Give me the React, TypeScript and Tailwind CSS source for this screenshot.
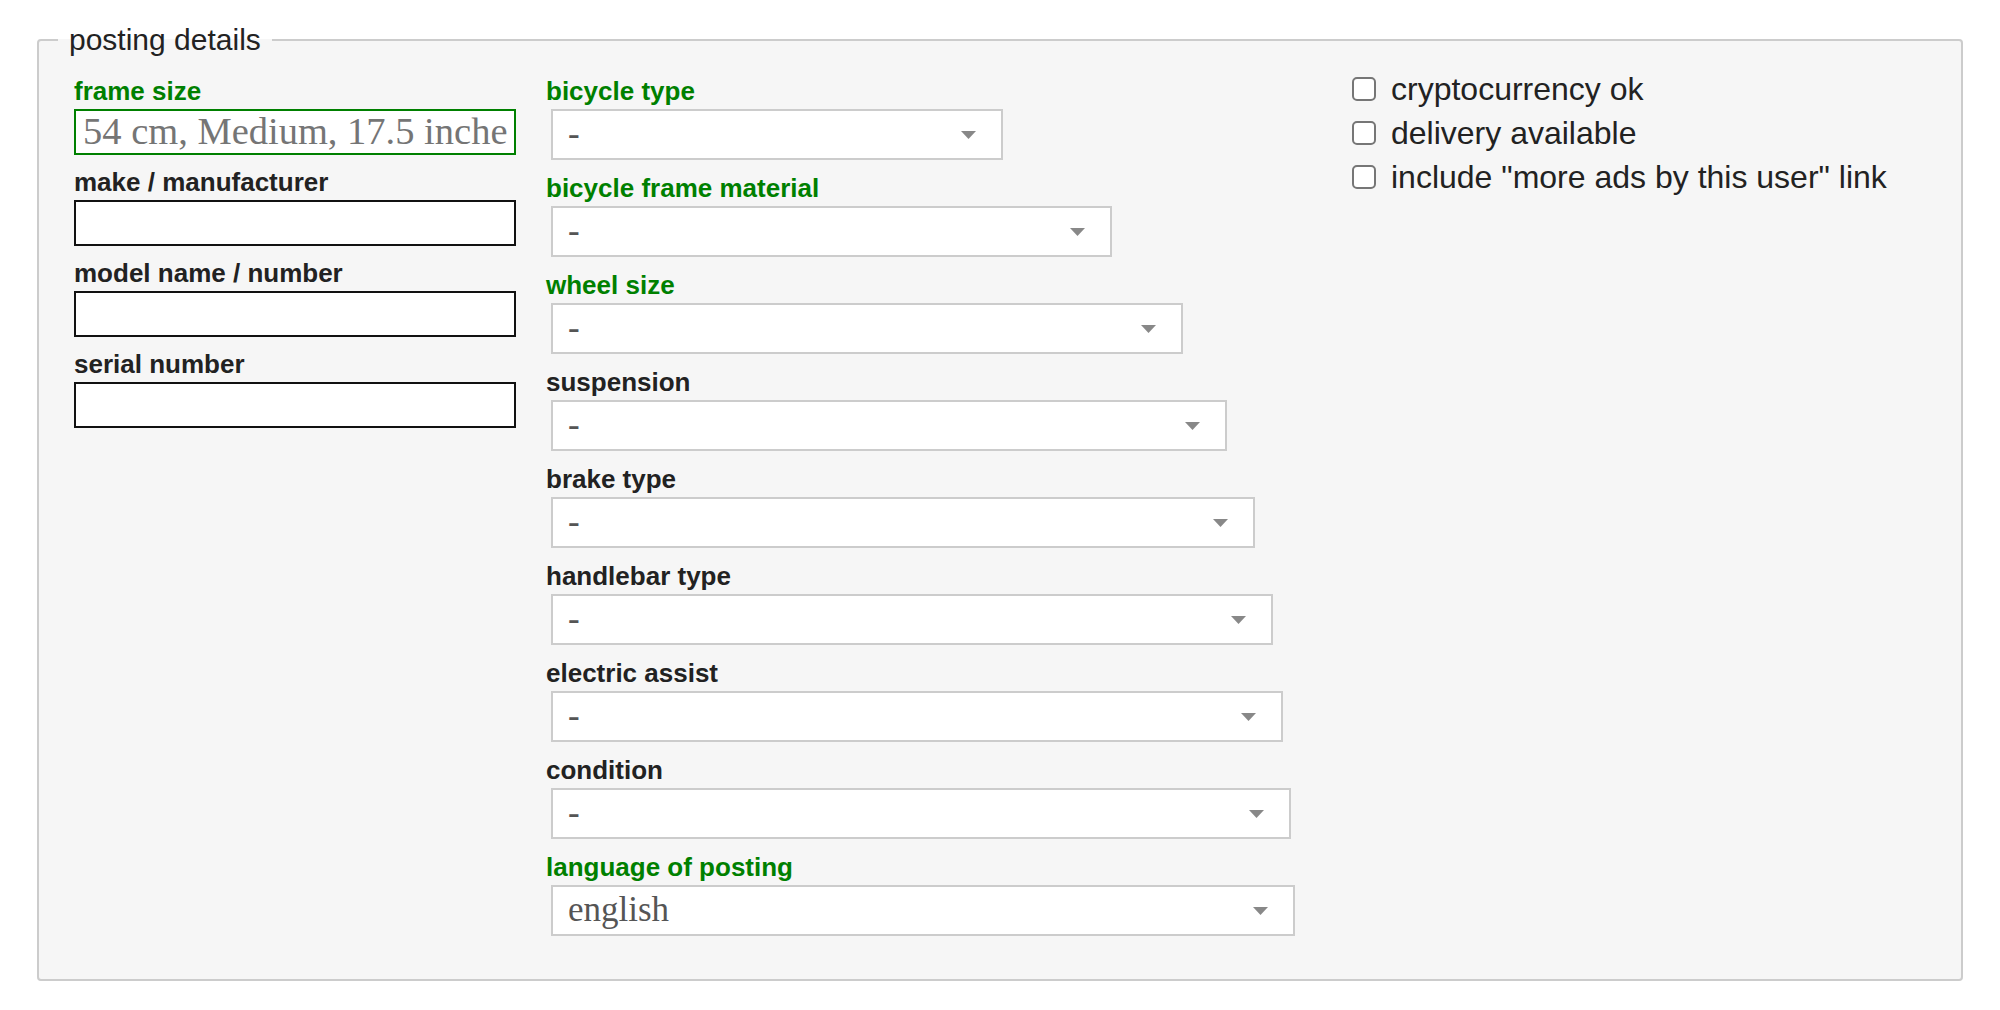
import React from "react";

const sans = "font-['Liberation_Sans',Arial,sans-serif]";
const serif = "font-['Liberation_Serif','Times_New_Roman',serif]";

const textFields = [
  { label: "frame size", green: true, placeholder: "54 cm, Medium, 17.5 inches" },
  { label: "make / manufacturer", green: false, placeholder: "" },
  { label: "model name / number", green: false, placeholder: "" },
  { label: "serial number", green: false, placeholder: "" },
];

const selects = [
  { label: "bicycle type", green: true, width: "w-[452px]", value: "-" },
  { label: "bicycle frame material", green: true, width: "w-[561px]", value: "-" },
  { label: "wheel size", green: true, width: "w-[632px]", value: "-" },
  { label: "suspension", green: false, width: "w-[676px]", value: "-" },
  { label: "brake type", green: false, width: "w-[704px]", value: "-" },
  { label: "handlebar type", green: false, width: "w-[722px]", value: "-" },
  { label: "electric assist", green: false, width: "w-[732px]", value: "-" },
  { label: "condition", green: false, width: "w-[740px]", value: "-" },
  { label: "language of posting", green: true, width: "w-[744px]", value: "english" },
];

const checks = ["cryptocurrency ok", "delivery available", 'include "more ads by this user" link'];

function Label({ text, green }: { text: string; green: boolean }) {
  return (
    <div className={`${sans} text-[26px] leading-[29px] font-bold mb-[3px] ${green ? "text-[#008000]" : "text-[#222]"}`}>
      {text}
    </div>
  );
}

function Arrow() {
  return (
    <svg width="15" height="8" viewBox="0 0 15 8" className="shrink-0">
      <path d="M0 0H15L7.5 8Z" fill="#888" />
    </svg>
  );
}

export default function App() {
  return (
    <div className="min-h-screen bg-white px-[37px] pt-[23px]">
      <fieldset className="border-2 border-[#ccc] rounded-[4px] bg-[#f6f6f6] p-0 m-0">
        <legend className={`${sans} ml-[19px] px-[11px] text-[30px] leading-[33px] text-[#222]`}>posting details</legend>
        <div className="flex px-[35px] pt-[11px] pb-[29px]">
          {/* left column: text inputs */}
          <div className="w-[442px] pt-[10px] shrink-0">
            {textFields.map((f) => (
              <div key={f.label} className="mb-[13px]">
                <Label text={f.label} green={f.green} />
                <input
                  type="text"
                  placeholder={f.placeholder}
                  className={`${serif} block w-full h-[46px] border-2 bg-white px-[7px] text-[38.5px] text-[#222] placeholder:text-[#757575] outline-none ${
                    f.green ? "border-[#008000]" : "border-[#111]"
                  }`}
                />
              </div>
            ))}
          </div>

          {/* middle column: selects */}
          <div className="ml-[30px] w-[806px] pt-[10px] shrink-0">
            {selects.map((s) => (
              <div key={s.label} className="mb-[14px]">
                <Label text={s.label} green={s.green} />
                <div
                  className={`${s.width} ml-[5px] h-[51px] border-2 border-[#ccc] bg-white flex items-center justify-between pl-[15px] pr-[25px]`}
                >
                  <span className={`${serif} text-[35px] text-[#555]`}>{s.value}</span>
                  <Arrow />
                </div>
              </div>
            ))}
          </div>

          {/* right column: checkboxes */}
          <div className="flex-1">
            {checks.map((c) => (
              <label key={c} className={`${sans} h-[44px] flex items-center gap-[15px] text-[32px] text-[#222]`}>
                <input
                  type="checkbox"
                  className="appearance-none w-[24px] h-[24px] border-2 border-[#767676] rounded-[5px] bg-white shrink-0"
                />
                <span>{c}</span>
              </label>
            ))}
          </div>
        </div>
      </fieldset>
    </div>
  );
}
